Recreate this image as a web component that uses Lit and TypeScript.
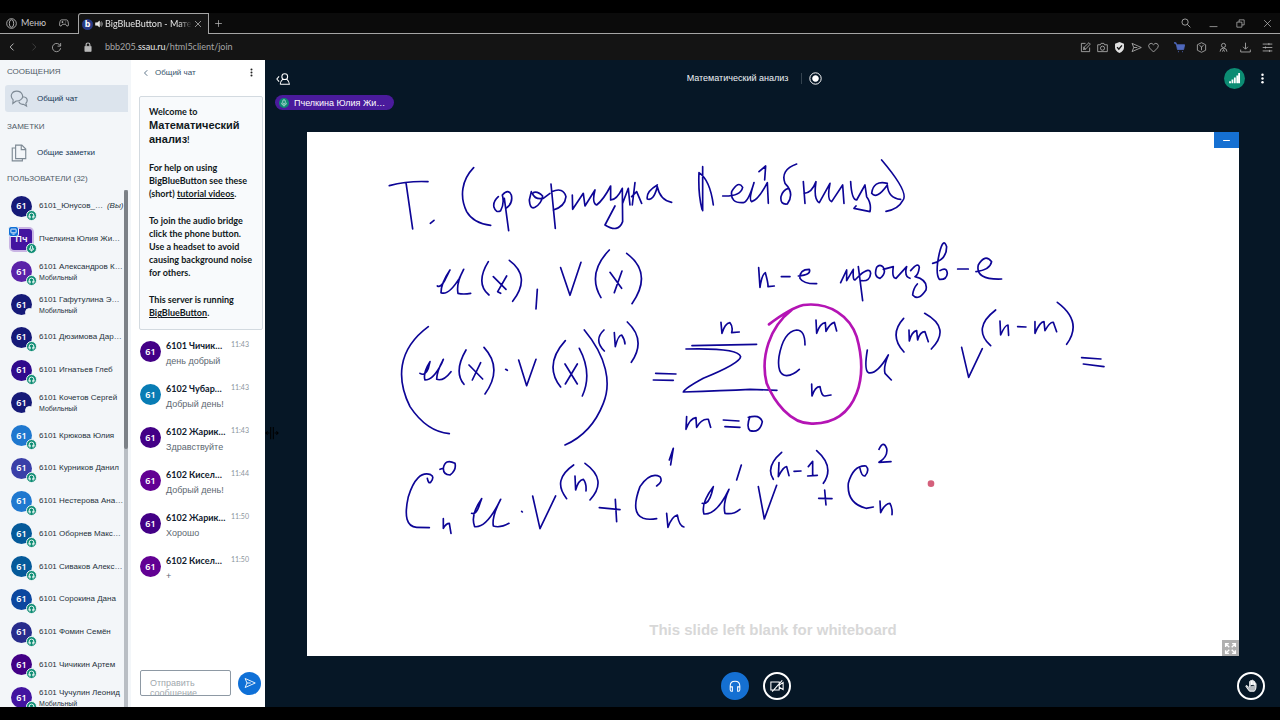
import { LitElement, html, svg, css } from "lit";
import { customElement } from "lit/decorators.js";
import { classMap } from "lit/directives/class-map.js";

interface User {
  initials: string;
  name: string;
  tone: string;
  note?: string;
  self?: boolean;
  presenter?: boolean;
  noAudio?: boolean;
}

const users: User[] = [
  { initials: "61", name: "6101_Юнусов_…", tone: "navy", self: true },
  { initials: "Пч", name: "Пчелкина Юлия Жи…", tone: "purple", presenter: true },
  { initials: "61", name: "6101 Александров К…", tone: "violet", note: "Мобильный" },
  { initials: "61", name: "6101 Гафутулина Э…", tone: "navy", note: "Мобильный", noAudio: true },
  { initials: "61", name: "6101 Дюзимова Дар…", tone: "navy" },
  { initials: "61", name: "6101 Игнатьев Глеб", tone: "indigo" },
  { initials: "61", name: "6101 Кочетов Сергей", tone: "navy", note: "Мобильный", noAudio: true },
  { initials: "61", name: "6101 Крюкова Юлия", tone: "sky" },
  { initials: "61", name: "6101 Курников Данил", tone: "iris" },
  { initials: "61", name: "6101 Нестерова Ана…", tone: "sky" },
  { initials: "61", name: "6101 Оборнев Макс…", tone: "ocean" },
  { initials: "61", name: "6101 Сиваков Алекс…", tone: "ocean" },
  { initials: "61", name: "6101 Сорокина Дана", tone: "cobalt" },
  { initials: "61", name: "6101 Фомин Семён", tone: "dusk" },
  { initials: "61", name: "6101 Чичикин Артем", tone: "plum" },
  { initials: "61", name: "6101 Чучулин Леонид", tone: "purple", note: "Мобильный" },
];

const messages = [
  { name: "6101 Чичик…", time: "11:43", text: "день добрый", tone: "plum" },
  { name: "6102 Чубар…", time: "11:43", text: "Добрый день!", tone: "cyan" },
  { name: "6102 Жарик…", time: "11:43", text: "Здравствуйте", tone: "plum" },
  { name: "6102 Кисел…", time: "11:44", text: "Добрый день!", tone: "grape" },
  { name: "6102 Жарик…", time: "11:50", text: "Хорошо", tone: "plum" },
  { name: "6102 Кисел…", time: "11:50", text: "+", tone: "grape" },
];

// Pen strokes of the lecture, three units to the pixel, grouped by board region.
const ink = [
  {
    x: 370, y: 150, d: `
    M58 107Q115 92 174 95M108 98L128 237M181 220L192 211M311 53C275 90 268 140 290 185Q310 220 362 226
    M385 140Q368 155 372 172Q378 190 392 182Q404 160 397 135Q415 115 424 135Q430 160 408 175M403 145L416 242
    M484 125L478 150Q480 180 495 172Q515 160 518 138Q500 120 487 130Q495 150 520 145L540 130
    M543 102L556 235M545 125Q580 110 588 140Q585 170 550 180
    M607 135L608 178L640 130L645 168L675 120Q665 160 680 165Q700 150 722 108L722 150Q740 150 757 115L758 215Q745 250 705 225L735 168
    M758 160L775 115L780 165M795 98L787 165M785 140L800 125L815 160M862 105Q828 125 832 147Q850 155 862 110Q870 150 905 157
    M202 408Q212 414 225 390L240 360Q213 400 213 428Q235 438 268 385L281 358Q258 400 264 430Q280 434 302 430
    M355 335Q315 400 357 435M370 380L408 418M410 378L383 425L392 430M418 331Q485 380 428 454M502 418L498 477
    M572 353L600 436L633 337M718 300Q650 370 693 443M720 367L755 415M756 363L733 428M770 310Q850 370 786 461`,
  },
  {
    x: 680, y: 150, d: `
    M68 50L68 182M66 178Q54 130 57 68Q90 90 100 165M128 138Q182 140 188 112Q175 90 155 125Q150 160 190 158Q205 155 222 98Q205 150 215 155Q235 150 262 98L265 160
    M237 65L257 48L254 90M350 42Q300 60 315 100Q345 130 322 162Q300 165 303 140Q308 120 325 115
    M370 95L375 160M372 130Q395 130 408 95Q400 150 418 158L450 100Q440 150 455 155L488 105L492 160
    M512 95Q515 150 530 150L555 105L560 140Q575 160 570 185L522 175L528 168M622 100Q580 90 575 130Q590 150 622 105Q625 145 662 148
    M605 30Q690 130 668 152Q655 178 618 184
    M236 353L240 412Q245 375 256 368Q265 400 264 410L283 408M304 380L330 380M355 378Q395 375 388 358Q358 358 360 385Q370 402 410 401
    M482 398L500 360L500 392L520 358Q518 392 525 390L545 370M535 350L548 452M540 375Q570 350 572 370Q570 395 545 392
    M590 352Q580 380 600 385Q620 370 610 352Q600 340 590 352M610 358L640 350Q635 385 648 385L680 350Q672 380 690 385
    M692 362Q715 335 718 352Q715 375 705 380Q745 390 738 420Q715 455 698 435Q700 415 712 402
    M758 340Q800 330 800 290Q790 260 778 310Q765 370 778 388Q800 390 802 370Q800 350 780 362M833 357L865 357
    M888 365Q930 360 935 335Q915 310 895 345Q885 390 965 387`,
  },
  {
    x: 390, y: 310, d: `
    M115 50C20 120 20 210 60 290Q110 365 178 371M90 190Q105 200 115 175L120 155Q98 190 105 210Q130 210 155 160L160 148Q140 185 140 208Q160 215 183 185
    M228 120Q190 185 222 223M237 165L278 207M272 158L247 210M282 112Q340 175 285 252M347 178L352 181M386 150L410 227L438 148
    M526 92Q460 165 512 231M525 162L562 222M562 162L526 222M568 115Q608 190 577 258
    M583 60C650 140 665 220 640 280Q605 370 525 405M642 60Q610 90 643 123M673 68L676 110Q685 75 695 75Q705 90 705 102
    M712 36Q770 90 724 157M797 190L858 192M790 210L850 211M993 37L996 70Q1005 40 1020 38Q1030 50 1025 68L1048 66
    M906 107L1100 103M888 117Q1045 113 1052 140Q1050 160 940 205Q885 235 880 246Q1000 242 1080 238L1161 241
    M890 320L888 358Q900 325 918 323L920 352Q935 325 955 328L962 352M1000 330L1047 333M1005 350L1050 352
    M112 505Q115 522 122 517Q135 500 122 494Q80 480 55 560Q35 650 80 652L118 653M160 475Q160 495 180 495Q200 480 195 460Q165 445 160 475L150 478
    M160 626L160 655Q168 640 178 640L183 670M245 610Q260 615 270 580L275 566Q240 615 254 650Q290 655 332 568Q305 620 310 648Q330 655 357 640
    M395 604L397 606M428 558L450 656L497 558M551 465Q485 510 530 566M555 498L557 540Q565 510 580 508Q590 520 588 543
    M585 460Q655 510 600 570M628 593L690 599M676 568L680 635M800 528Q820 515 810 500Q780 485 750 530Q720 610 760 625Q775 630 800 626
    M838 450L850 415L842 465M830 610L834 652Q845 620 862 615Q868 650 882 651
    M937 580Q955 585 965 550L970 530Q932 580 942 612Q980 615 1017 538Q998 580 1005 610Q1030 615 1050 598M1040 510L1054 465`,
  },
  {
    x: 740, y: 290, d: `
    M30 380Q18 410 30 422Q60 430 67 395Q60 375 35 380L25 382M195 165Q195 120 170 120Q130 125 117 200Q110 255 140 257Q160 255 178 238
    M228 90L230 130Q240 100 256 98L258 124Q270 100 283 97L290 123M215 282L216 318Q225 290 240 290Q245 320 255 318L273 315
    M382 180Q372 240 385 248Q410 255 445 195Q430 230 435 250L454 270M491 85Q445 135 492 186
    M507 120L508 153Q515 125 530 122L533 150Q540 125 555 125L565 155M554 70Q635 115 574 177M665 172L686 262L727 176
    M767 60Q695 115 752 167M780 93L782 135Q795 105 804 105L806 136M833 110L858 111
    M885 95L885 130Q900 95 912 95L915 122Q930 95 940 97L950 125M952 37Q1030 95 980 163M1025 203L1083 207M1030 222L1092 230
    M55 590L73 687L110 586M125 487Q75 530 100 568M117 518L115 560Q130 530 140 530L147 557M162 544L183 543
    M205 530L218 514L218 557M203 558L232 556M230 482Q285 530 250 580M236 625L276 626M254 600L258 645
    M360 535Q365 560 375 558Q390 540 378 528Q340 525 325 580Q320 640 378 655L400 651M417 478Q430 450 440 475Q445 500 417 517L453 515
    M420 633L422 668Q435 640 450 640Q458 655 456 674`,
  },
];

const icon = (size: number, body: unknown) =>
  html`<svg class="icon" width=${size} height=${size} viewBox="0 0 16 16" aria-hidden="true">${body}</svg>`;

const icons = {
  opera: svg`<circle cx="8" cy="8" r="7"/><ellipse cx="8" cy="8" rx="3.2" ry="5.5"/>`,
  pad: svg`<path d="M4 3h8q2 0 2.500 3l.7 5q-.4 3-3 1.500L10.500 10h-5L3.800 12.500Q1.200 14 .8 11l.7-5Q2 3 4 3zM4 6.500h3M5.500 5v3M10.500 6h1M9.500 8h1"/>`,
  close: svg`<path d="M2 2l12 12M14 2L2 14"/>`,
  plus: svg`<path d="M8 2v12M2 8h12"/>`,
  sound: svg`<path d="M1 5.500h3.500L9 2v12l-4.500-3.500H1z" fill="currentColor"/><path d="M11 5q2.500 3 0 6M13 3q3.500 5 0 10"/>`,
  back: svg`<path d="M10.500 2.500L5 8l5.500 5.500" stroke-width="1.600"/>`,
  forward: svg`<path d="M5.500 2.500L11 8l-5.500 5.500"/>`,
  reload: svg`<path d="M13.500 5.500A6 6 0 1 0 14 9M14 1.500v4.500H9.500"/>`,
  lock: svg`<path d="M3 7h10v8H3z" fill="currentColor"/><path d="M5 7V4.500q0-3 3-3t3 3V7" stroke-width="1.800"/>`,
  search: svg`<circle cx="6.500" cy="6.500" r="5"/><path d="M10.200 10.200L15 15"/>`,
  minimize: svg`<path d="M1 13.500h14"/>`,
  restore: svg`<path d="M1.500 5.500h9v9h-9zM5.500 5.500v-4h9v9h-4"/>`,
  edit: svg`<path d="M8 2H2v12h12V8M5 11l1-3.500L13 1l2 2-6.500 7zM5 7l3 4"/>`,
  camera: svg`<path d="M1 4h4l1-2h4l1 2h4v10H1z"/><circle cx="8" cy="9" r="3"/>`,
  shield: svg`<path d="M8 0l6.500 2.500V8q0 5-6.500 8Q1.500 13 1.500 8V2.500z" fill="currentColor" stroke="none"/><path d="M4.500 7.500l2.500 3L11.500 5" stroke="#141414" stroke-width="2"/>`,
  send: svg`<path d="M1.500 2L15 8 1.500 14 4 8zM4 8h5"/>`,
  heart: svg`<path d="M8 14.500L2 8.500Q-.5 5 2.500 2.500 6 .8 8 4q2-3.200 5.500-1.500 3 2.500.5 6z"/>`,
  cart: svg`<path d="M0 1h3l2 10h9l1.500-7H4z" fill="currentColor"/><path d="M6 14h1M12 14h1" stroke-width="2"/>`,
  box: svg`<path d="M8 1l6 3v8l-6 3-6-3V4zM5 5l3 2 3-2M8 7v5"/>`,
  person: svg`<circle cx="8" cy="5" r="3"/><path d="M3 14q0-5 5-5t5 5M6.500 14L8 11l1.500 3"/>`,
  download: svg`<path d="M8 1v9M4.500 7L8 10.500 11.500 7M1 11v3.500h14V11"/>`,
  tune: svg`<path d="M1 3h14M1 8h14M1 13h14M10 1.500v3M5 6.500v3M11 11.500v3"/>`,
  chats: svg`<path d="M5.500 9.800L2.500 12l.3-3.200C-.5 5.500 1.500 1 6 1s7 5 3.600 7.600Q8 10 5.500 9.800zM11.500 6q4 .5 3.800 3.500-.2 1.500-1.200 2.200l.6 2.600-2.700-1.600q-3 .5-4.200-2.200"/>`,
  pages: svg`<path d="M5 1h5.500L14 4.500V13H5zM10 1v4h4M5 3.500H2V15h9v-2"/>`,
  headset: svg`<path d="M2.500 11V8q0-5.500 5.500-5.500T13.500 8v3M2.500 9h2.500v5H4q-1.500 0-1.500-2zM13.500 9H11v5h1q1.500 0 1.500-2z"/>`,
  mic: svg`<rect x="5.500" y="1.500" width="5" height="8.500" rx="2.500"/><path d="M3 7.500q0 5 5 5t5-5M8 12.500V15"/>`,
  screen: svg`<rect x="2" y="2.500" width="12" height="8.500" rx="1"/><path d="M5.500 14h5"/>`,
  userMenu: svg`<path d="M3.500 5L1 8l2.500 3M10 2a3.300 3.300 0 0 1 0 6.600A3.300 3.300 0 0 1 10 2zM4.800 14q0-3 3-5.800M12.300 8.200q3 2.800 3 5.800H4.800"/>`,
  dots: svg`<g fill="currentColor" stroke="none"><circle cx="8" cy="2.500" r="1.800"/><circle cx="8" cy="8" r="1.800"/><circle cx="8" cy="13.500" r="1.800"/></g>`,
  record: svg`<circle cx="8" cy="8" r="7"/><circle cx="8" cy="8" r="3.500" fill="currentColor"/>`,
  bars: svg`<path d="M1.500 15v-3M5 15V9.500M8.500 15V6.500M12 15V3.500M14.700 15V0" stroke-width="2.600"/>`,
  expand: svg`<path d="M2 6V2h4M2 2l4.500 4.500M10 2h4v4M14 2L9.500 6.500M2 10v4h4M2 14l4.500-4.500M14 10v4h-4M14 14L9.500 9.500" stroke-width="1.700"/>`,
  noVideo: svg`<path d="M1 3.500h9.500v9H1zM10.500 7L15 4v8l-4.500-2.500M2.500 14.500L14 1.500"/>`,
  hand: svg`<path d="M4 9.500L1.500 8Q.5 9 2 10.500L5.500 15h6q2-2 2-5V5.500q-1-1.500-1.700 0V8M11.800 7V3q-1-1.500-2 0v4.500M9.800 7V2q-1-1.500-2 0v5.500M7.800 7V3q-1-1.500-2 0v7" fill="currentColor" fill-opacity=".7"/>`,
  resize: svg`<path d="M6.500 1v14M9.500 1v14M1 8h4M11 8h4M3 6L1 8l2 2M13 6l2 2-2 2"/>`,
};

@customElement("app-root")
export class AppRoot extends LitElement {
  static styles = css`
    :host {
      display: flex;
      flex-direction: column;
      height: 100vh;
      overflow: hidden;
      box-sizing: border-box;
      padding: 13px 0;
      background: #000;
      color: #4e5a66;
      font: 9px/12px "Liberation Sans", Arial, sans-serif;
    }
    * { box-sizing: border-box; }
    button {
      display: inline-flex;
      align-items: center;
      justify-content: center;
      flex: none;
      margin: 0;
      padding: 0;
      border: 0;
      background: none;
      color: inherit;
      font: inherit;
    }
    h1, h2, p, ul { margin: 0; padding: 0; list-style: none; }
    .icon { display: block; flex: none; fill: none; stroke: currentColor; stroke-width: 1.2; }

    .tabs, .address { font-family: Lato, sans-serif; }
    .tabs {
      display: flex;
      flex: none;
      height: 21px;
      background: #0b0b0b;
      color: #c8c8c8;
    }
    .line { border-bottom: 1px solid #a5a5a5; }
    .brand { display: flex; align-items: center; gap: 13px; width: 78px; padding-left: 6px; }
    .brand button { gap: 4px; }
    .tab {
      display: flex;
      align-items: center;
      gap: 2px;
      width: 131px;
      padding: 0 6px 0 3px;
      border: 1px solid #a5a5a5;
      border-bottom: 0;
      border-radius: 3px 0 0 0;
      background: #141414;
      color: #e6e6e6;
    }
    .tab-title {
      flex: 1;
      overflow: hidden;
      white-space: nowrap;
      -webkit-mask-image: linear-gradient(90deg, #000 85%, transparent);
      mask-image: linear-gradient(90deg, #000 85%, transparent);
    }
    .favicon {
      display: grid;
      place-items: center;
      width: 11px;
      height: 11px;
      border-radius: 50%;
      background: #283a86;
      color: #fff;
      font: bold 9px/10px "Noto Sans", sans-serif;
    }
    .strip { display: flex; flex: 1; align-items: center; justify-content: space-between; padding: 0 8px 0 5px; }
    .window { display: flex; gap: 18px; }
    .address {
      display: flex;
      flex: none;
      align-items: center;
      height: 26px;
      padding: 0 7px;
      background: #141414;
      color: #b4b4b4;
    }
    .nav { display: flex; gap: 12px; }
    .dim { color: #4a4a4a; }
    .secure { margin: 0 12px 0 21px; color: #b9b9b9; }
    .url { flex: 1; color: #a6a6a6; }
    .url b { color: #e8e8e8; font-weight: 400; }
    .tools { display: flex; gap: 6px; }
    .tools.wide { gap: 11px; margin-left: 15px; }
    .blue { color: #4f68bd; }
    .white { color: #e0e0e0; }

    .app { display: flex; flex: 1; min-height: 0; }
    .people {
      display: flex;
      flex: none;
      flex-direction: column;
      width: 131px;
      background: #f3f6f9;
      font-size: 8px;
    }
    .people h2 { padding-left: 7px; color: #4e5a66; font-weight: 500; font-size: 8px; }
    .group { display: flex; flex: none; flex-direction: column; gap: 7px; padding: 6px 3px 8px 0; }
    .entry { justify-content: flex-start; gap: 9px; height: 27px; margin-left: 5px; padding-left: 5px; border-radius: 3px 0 0 3px; color: #163757; }
    .entry.on { background: #dce4ed; }
    .entry .icon { color: #7d8994; stroke-width: 1; }
    .notes { padding: 1px 3px 0 0; gap: 6px; }
    .count { padding-top: 7px; }
    .roster { display: flex; flex: 1; min-height: 0; margin-top: 5px; overflow: hidden; }
    .roster ul { display: flex; flex: 1; flex-direction: column; min-width: 0; margin-bottom: -7px; padding-left: 11px; }
    .roster li { display: flex; flex: 1; align-items: center; gap: 7px; }
    .bar { width: 4px; margin-right: 3px; background: #b9bec4; }
    .thumb { height: 50%; border-radius: 2px; background: #7c8187; }
    .who { display: flex; flex: 1; flex-direction: column; min-width: 0; color: #26323c; }
    .row { display: flex; gap: 4px; white-space: nowrap; }
    .small { font-size: 7px; line-height: 9px; }
    .me { font-style: italic; }
    .avatar {
      position: relative;
      display: grid;
      flex: none;
      place-items: center;
      width: 21px;
      height: 21px;
      border-radius: 50%;
      color: #fff;
      font: 600 9px/12px "Noto Sans", sans-serif;
    }
    .avatar.square { border-radius: 3px; box-shadow: 0 0 0 2px #c9b5e4; }
    .badge {
      position: absolute;
      right: -5px;
      bottom: -4px;
      display: grid;
      place-items: center;
      width: 11px;
      height: 11px;
      border: 1px solid #f3f6f9;
      border-radius: 50%;
      background: #0c8c73;
    }
    .badge .icon { stroke-width: 2; }
    .badge.none { width: 9px; height: 9px; right: -2px; bottom: -2px; background: #f3f6f9; }
    .badge.show { right: auto; bottom: auto; left: -3px; top: -3px; border-radius: 3px; background: #0f70d7; }
    .navy { background: #161a78; }
    .purple { background: #4314a0; }
    .violet { background: #5a22a8; }
    .indigo { background: #300a8c; }
    .sky { background: #1f78cf; }
    .iris { background: #3a3fa8; }
    .ocean { background: #055a9a; }
    .cobalt { background: #0c479f; }
    .dusk { background: #282c8c; }
    .plum { background: #430086; }
    .grape { background: #620093; }
    .cyan { background: #087cb4; }

    .chat { display: flex; flex: none; flex-direction: column; width: 134px; background: #fff; }
    .chat-head { display: flex; justify-content: space-between; height: 36px; padding: 6px 9px 0 11px; font-size: 8px; }
    .chat-head button { height: 13px; gap: 5px; color: #35526b; }
    .chat-head .more { color: #222; }
    .log { flex: 1; min-height: 0; padding: 0 2px 0 8px; overflow: hidden; }
    .welcome {
      display: grid;
      gap: 14px;
      padding: 8px 8px 10px 9px;
      border: 1px solid #d3dae0;
      border-radius: 2px;
      background: #f8fafc;
      color: #101820;
      font: bold 9px/13px Lato, "Liberation Sans", sans-serif;
    }
    .welcome .lead { line-height: 14px; }
    .welcome strong { font: bold 11px/12px "Liberation Sans", sans-serif; }
    .welcome a { color: inherit; }
    .messages { padding-top: 10px; }
    .messages li { display: flex; gap: 5px; height: 43px; padding: 1px 0 0 1px; }
    .body { display: grid; flex: 1; grid-template-columns: 60px auto; justify-content: start; align-content: start; gap: 3px 5px; min-width: 0; margin-top: -2px; }
    .name { color: #10202e; font: bold 9px/13px Lato, sans-serif; white-space: nowrap; }
    .time { color: #8b949c; font: 7px/10px Lato, sans-serif; }
    .said { grid-column: 1 / -1; color: #5d6771; }
    .compose { display: flex; align-items: center; gap: 7px; height: 50px; padding: 2px 4px 0 9px; }
    textarea {
      flex: 1;
      min-width: 0;
      height: 26px;
      padding: 7px 9px 0;
      overflow: hidden;
      resize: none;
      border: 1px solid #8e99a4;
      border-radius: 2px;
      font: 9px/10px "Liberation Sans", sans-serif;
    }
    textarea::placeholder { color: #a1a8ae; opacity: 1; }
    .send { width: 23px; height: 23px; border-radius: 50%; background: #0f70d7; color: #fff; }

    .stage { display: flex; flex: 1; flex-direction: column; min-width: 0; background: #061726; color: #fff; }
    .top { display: grid; grid-template-columns: 1fr auto 1fr; align-items: center; height: 37px; padding: 0 12px 0 11px; }
    .top .toggle { justify-self: start; }
    .title { display: flex; align-items: center; gap: 7px; padding-right: 35px; }
    .title h1 { padding-right: 13px; border-right: 1px solid #34434f; color: #eef3f6; font-size: 9px; font-weight: 400; line-height: 11px; }
    .right { display: flex; align-items: center; justify-content: flex-end; gap: 12px; }
    .signal { width: 21px; height: 21px; border-radius: 50%; background: #0c8c73; }
    .talking { height: 35px; padding: 0 10px; }
    .pill {
      justify-content: flex-start;
      gap: 5px;
      width: 119px;
      height: 15px;
      margin-top: -2px;
      padding: 0 4px;
      border-radius: 8px;
      background: #4a1b9c;
      white-space: nowrap;
    }
    .pill .mic { display: grid; place-items: center; width: 10px; height: 10px; border-radius: 50%; background: #0c8c73; }
    .slide {
      position: relative;
      display: flex;
      flex: 1;
      flex-direction: column;
      align-items: flex-end;
      min-height: 0;
      margin: 0 41px 0 42px;
      background: #fff;
    }
    .ink { position: absolute; inset: 0; width: 100%; height: 100%; fill: none; stroke-linecap: round; stroke-linejoin: round; }
    .pen { stroke: #0d0596; stroke-width: 5; }
    .marker { stroke: #b414b4; stroke-width: 8; }
    .laser { fill: #d4607b; }
    .hide { position: relative; width: 25px; height: 16px; background: #1570d2; }
    .caption { margin: auto auto 1px; color: #d8d8d8; font: bold 15px/18px "Liberation Sans", sans-serif; }
    .full { position: relative; width: 17px; height: 16px; background: #b0b0b0; }
    .actions { display: grid; grid-template-columns: 1fr auto 1fr; align-items: center; height: 51px; padding: 8px 15px 0 0; }
    .middle { display: flex; gap: 14px; grid-column: 2; padding-right: 19px; }
    .round { width: 28px; height: 28px; border: 2px solid #fff; border-radius: 50%; }
    .round.active { border-color: #1570d2; background: #1570d2; }
    .actions .raise { justify-self: end; }
    .cursor { position: absolute; left: 265px; top: 426px; color: #000; }
  `;

  private user(u: User) {
    return html`<li>
      <span class=${classMap({ avatar: true, square: !!u.presenter, [u.tone]: true })}>${u.initials}
        ${u.presenter ? html`<span class="badge show">${icon(7, icons.screen)}</span>` : ""}
        <span class=${classMap({ badge: true, none: !!u.noAudio })}>
          ${u.noAudio ? "" : icon(7, u.presenter ? icons.mic : icons.headset)}
        </span>
      </span>
      <div class="who">
        <div class="row"><span>${u.name}</span>${u.self ? html`<span class="me">(Вы)</span>` : ""}</div>
        ${u.note ? html`<span class="small">${u.note}</span>` : ""}
      </div>
    </li>`;
  }

  render() {
    return html`
      <header class="tabs">
        <div class="brand line">
          <button>${icon(11, icons.opera)} Меню</button>
          <button aria-label="GX">${icon(10, icons.pad)}</button>
        </div>
        <div class="tab">
          <span class="favicon">b</span>${icon(8, icons.sound)}
          <span class="tab-title">BigBlueButton - Матем</span>
          <button aria-label="Закрыть вкладку">${icon(8, icons.close)}</button>
        </div>
        <div class="strip line">
          <button aria-label="Новая вкладка">${icon(9, icons.plus)}</button>
          <div class="window">
            <button aria-label="Поиск">${icon(10, icons.search)}</button>
            <button aria-label="Свернуть">${icon(9, icons.minimize)}</button>
            <button aria-label="Восстановить">${icon(9, icons.restore)}</button>
            <button aria-label="Закрыть">${icon(9, icons.close)}</button>
          </div>
        </div>
      </header>
      <nav class="address">
        <div class="nav">
          <button aria-label="Назад">${icon(10, icons.back)}</button>
          <button class="dim" aria-label="Вперед">${icon(10, icons.forward)}</button>
          <button aria-label="Обновить">${icon(11, icons.reload)}</button>
        </div>
        <span class="secure">${icon(10, icons.lock)}</span>
        <span class="url">bbb205.<b>ssau.ru</b>/html5client/join</span>
        <div class="tools">
          <button aria-label="Правка">${icon(11, icons.edit)}</button>
          <button aria-label="Снимок">${icon(11, icons.camera)}</button>
          <button class="white" aria-label="Защита">${icon(11, icons.shield)}</button>
          <button aria-label="Отправить">${icon(11, icons.send)}</button>
          <button aria-label="Избранное">${icon(11, icons.heart)}</button>
        </div>
        <div class="tools wide">
          <button class="blue" aria-label="Корзина">${icon(11, icons.cart)}</button>
          <button aria-label="Расширения">${icon(11, icons.box)}</button>
          <button aria-label="Профиль">${icon(11, icons.person)}</button>
          <button aria-label="Загрузки">${icon(11, icons.download)}</button>
          <button aria-label="Настройка">${icon(11, icons.tune)}</button>
        </div>
      </nav>
      <div class="app">
        <aside class="people">
          <div class="group">
            <h2>СООБЩЕНИЯ</h2>
            <button class="entry on">${icon(18, icons.chats)} Общий чат</button>
          </div>
          <div class="group notes">
            <h2>ЗАМЕТКИ</h2>
            <button class="entry">${icon(18, icons.pages)} Общие заметки</button>
          </div>
          <h2 class="count">ПОЛЬЗОВАТЕЛИ (32)</h2>
          <div class="roster">
            <ul>${users.map((u) => this.user(u))}</ul>
            <div class="bar"><div class="thumb"></div></div>
          </div>
        </aside>
        <section class="chat">
          <div class="chat-head">
            <button>${icon(8, icons.back)} Общий чат</button>
            <button class="more" aria-label="Параметры чата">${icon(9, icons.dots)}</button>
          </div>
          <div class="log">
            <div class="welcome">
              <p class="lead">Welcome to <strong>Математический анализ</strong>!</p>
              <p>For help on using BigBlueButton see these (short) <a href="#tutorials">tutorial videos</a>.</p>
              <p>To join the audio bridge click the phone button. Use a headset to avoid causing background noise for others.</p>
              <p>This server is running <a href="#bbb">BigBlueButton</a>.</p>
            </div>
            <ul class="messages">
              ${messages.map((m) => html`<li>
                <span class="avatar ${m.tone}">${m.name.slice(0, 2)}</span>
                <div class="body">
                  <span class="name">${m.name}</span><time class="time">${m.time}</time>
                  <p class="said">${m.text}</p>
                </div>
              </li>`)}
            </ul>
          </div>
          <form class="compose">
            <textarea aria-label="Сообщение" placeholder="Отправить сообщение"></textarea>
            <button class="send" type="button" aria-label="Отправить">${icon(12, icons.send)}</button>
          </form>
        </section>
        <main class="stage">
          <div class="top">
            <button class="toggle" aria-label="Пользователи">${icon(14, icons.userMenu)}</button>
            <div class="title"><h1>Математический анализ</h1>${icon(13, icons.record)}</div>
            <div class="right">
              <button class="signal" aria-label="Соединение">${icon(11, icons.bars)}</button>
              <button aria-label="Параметры">${icon(11, icons.dots)}</button>
            </div>
          </div>
          <div class="talking">
            <button class="pill"><span class="mic">${icon(8, icons.mic)}</span><span>Пчелкина Юлия Жи…</span></button>
          </div>
          <div class="slide">
            <svg class="ink" viewBox="307 132 932 524" role="img" aria-label="Формула Лейбница">
              ${ink.map((g) => svg`<g transform="translate(${g.x} ${g.y}) scale(.3333)"><path class="pen" d=${g.d}/></g>`)}
              <g transform="translate(740 290) scale(.3333)">
                <path class="marker" d="M87 103Q150 55 190 45C270 35 330 80 350 140C370 210 365 270 350 310C325 375 280 400 220 401C150 405 100 330 80 280C60 200 90 110 155 60"/>
                <circle class="laser" cx="573" cy="581" r="10"/>
              </g>
            </svg>
            <button class="hide" aria-label="Свернуть презентацию">${icon(9, svg`<path d="M2 8h12" stroke-width="1.800"/>`)}</button>
            <p class="caption">This slide left blank for whiteboard</p>
            <button class="full" aria-label="Во весь экран">${icon(13, icons.expand)}</button>
          </div>
          <div class="actions">
            <div class="middle">
              <button class="round active" aria-label="Звук">${icon(14, icons.headset)}</button>
              <button class="round" aria-label="Камера">${icon(14, icons.noVideo)}</button>
            </div>
            <button class="round raise" aria-label="Поднять руку">${icon(13, icons.hand)}</button>
          </div>
        </main>
      </div>
      <span class="cursor">${icon(14, icons.resize)}</span>
    `;
  }
}
